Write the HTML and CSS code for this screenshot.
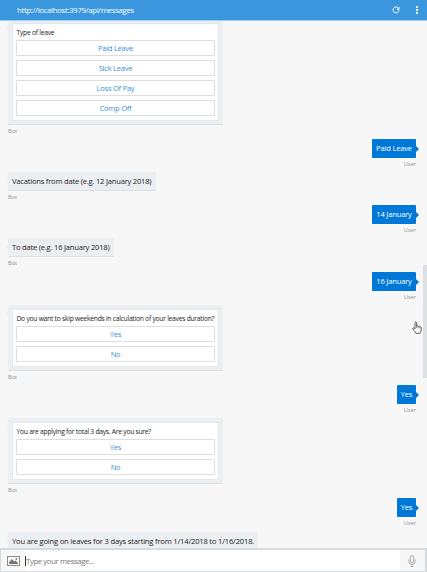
FILE: index.html
```html
<!DOCTYPE html>
<html lang="en">
<head>
<meta charset="utf-8">
<title>Bot chat</title>
<link rel="stylesheet" href="styles.css">
</head>
<body>
<div class="app">
  <header class="bar">
    <span class="url">http://localhost:3979/api/messages</span>
    <svg class="reload" viewBox="0 0 8 8"><path d="M6.6 2.2A3 3 0 1 0 7 4.4" fill="none" stroke="currentColor" stroke-width="1"/><path d="M7.4.8v3H4.4z" fill="currentColor"/></svg>
    <svg class="more" viewBox="0 0 2 8"><path d="M0 0h2v2H0zM0 3h2v2H0zM0 6h2v2H0z" fill="currentColor"/></svg>
  </header>
  <main class="chat">
    <section class="msg bot card-msg tall">
      <div class="bubble"><div class="card"><p>Type of leave</p><button>Paid Leave</button><button>Sick Leave</button><button>Loss Of Pay</button><button>Comp Off</button></div></div>
      <small>Bot</small>
    </section>
    <section class="msg user"><div class="bubble wide"><span>Paid Leave</span></div><small>User</small></section>
    <section class="msg bot"><div class="bubble b-from"><span>Vacations from date (e.g. 12 January 2018)</span></div><small>Bot</small></section>
    <section class="msg user"><div class="bubble wide"><span>14 January</span></div><small>User</small></section>
    <section class="msg bot"><div class="bubble b-to"><span>To date (e.g. 16 January 2018)</span></div><small>Bot</small></section>
    <section class="msg user"><div class="bubble wide"><span>16 January</span></div><small>User</small></section>
    <section class="msg bot card-msg">
      <div class="bubble"><div class="card"><p>Do you want to skip weekends in calculation of your leaves duration?</p><button>Yes</button><button>No</button></div></div>
      <small>Bot</small>
    </section>
    <section class="msg user"><div class="bubble short"><span>Yes</span></div><small>User</small></section>
    <section class="msg bot card-msg">
      <div class="bubble"><div class="card"><p>You are applying for total 3 days. Are you sure?</p><button>Yes</button><button>No</button></div></div>
      <small>Bot</small>
    </section>
    <section class="msg user"><div class="bubble short"><span>Yes</span></div><small>User</small></section>
    <section class="msg bot"><div class="bubble b-last"><span>You are going on leaves for 3 days starting from 1/14/2018 to 1/16/2018.</span></div></section>
  </main>
  <footer class="composer">
    <div class="attach"><svg viewBox="0 0 13 10"><rect x=".5" y=".5" width="12" height="9" fill="none" stroke="#8b8b8b"/><path d="M2 8V6.6L4.8 3l2.4 2.6 1.2-1.2L11 6.9V8z" fill="#777"/><circle cx="9.3" cy="3" r=".9" fill="#777"/></svg></div>
    <div class="field"><i></i><span>Type your message...</span></div>
    <div class="mic"><svg viewBox="0 0 8 12"><rect x="2.4" y=".5" width="3.2" height="7.4" rx="1.6" fill="none" stroke="#999" stroke-width=".8"/><path d="M.8 4.5v1.8a3.2 3.2 0 0 0 6.4 0V4.5M4 9.5v2M2.6 11.5h2.8" fill="none" stroke="#999" stroke-width=".8"/></svg></div>
  </footer>
  <div class="scroll"></div>
  <svg class="cursor" viewBox="0 0 10 13"><path d="M3 8V1.5Q3.8.1 4.6 1.5V5Q5.5 4.3 6.1 5.3 7 4.7 7.6 5.8 9 5.2 9.2 6.6V9Q9 10.5 8 12.3H4Q3.2 10.7.8 8.2.5 6.8 1.7 6.9z" fill="#fff" stroke="#444b55" stroke-width=".9"/><path d="M4.6 5v2M6.1 5.5v1.7M7.6 6v1.4" stroke="#444b55" stroke-width=".6"/></svg>
</div>
</body>
</html>
```
FILE: styles.css
```css
* { box-sizing: border-box; }
body { margin: 0; font-family: "Open Sans", "Noto Sans", sans-serif; }
.app {
  position: relative;
  display: flex;
  flex-direction: column;
  width: 427px;
  height: 572px;
  overflow: hidden;
  background: #f7f7f7;
}
.bar {
  position: relative;
  z-index: 2;
  flex: none;
  display: flex;
  align-items: center;
  height: 21px;
  padding: 0 9px 1px 17px;
  background: #3a96dd;
  border-bottom: 1px solid #a4cdef;
  color: #fff;
}
.url { flex: 1; font-size: 7.7px; line-height: 20px; white-space: nowrap; letter-spacing: -.27px; }
.reload { width: 8px; height: 8px; margin-right: 16px; }
.more { width: 2px; height: 8px; }
.chat { flex: 1; min-height: 0; margin-top: -2px; padding: 0 11px 0 8px; overflow: hidden; }
.msg { display: flex; flex-direction: column; align-items: flex-start; height: 33.15px; }
.msg.user { align-items: flex-end; }
.card-msg { height: 80.3px; }
.card-msg.tall { height: 120px; }
.bubble {
  position: relative;
  display: flex;
  align-items: center;
  height: 19px;
  padding: 0 4px;
  border-bottom: 1px solid #dde0e3;
  border-radius: 1px;
  background: #eceff2;
  color: #222;
  font-size: 7.6px;
  letter-spacing: -.2px;
  line-height: 18px;
  white-space: nowrap;
}
.bubble::before {
  content: "";
  position: absolute;
  top: 7px;
  left: -2px;
  border: solid transparent;
  border-width: 2px 2px 2px 0;
  border-right-color: #eceff2;
}
.user .bubble { background: #0078d7; border-color: #0078d7; color: #fff; justify-content: center; }
.user .bubble::before {
  top: 7px;
  left: auto;
  right: -3px;
  border-width: 3px 0 3px 3px;
  border-color: transparent transparent transparent #0078d7;
}
.wide { width: 44px; }
.short { width: 19px; }
.b-from { width: 148px; }
.b-from span { letter-spacing: -.22px; }
.b-to { width: 106px; }
.b-to span { letter-spacing: -.22px; }
.b-last { width: 250px; }
.b-last span { letter-spacing: -.19px; }
small { margin-top: 2px; font-size: 5.7px; line-height: 8px; color: #8f8f8f; }
.card-msg .bubble { width: 215px; height: 66px; padding: 4px; align-items: flex-start; }
.card-msg.tall .bubble { height: 106px; }
.card {
  display: flex;
  flex-direction: column;
  gap: 4px;
  width: 207px;
  height: 58px;
  padding: 3px;
  border: 1px solid #e2e8ee;
  background: #fff;
}
.tall .card { height: 98px; }
.card p { height: 9px; margin: 0; padding-left: .5px; font-size: 6.7px; line-height: 11px; letter-spacing: -.24px; }
.card button {
  flex: none;
  height: 16px;
  padding: 0;
  border: 1px solid #dedede;
  border-radius: 1px;
  background: #fff;
  color: #3a8fdb;
  font: 7.5px/14px "Open Sans", sans-serif;
  letter-spacing: -.22px;
}
.composer {
  position: relative;
  z-index: 2;
  flex: none;
  display: flex;
  height: 24px;
  border: solid #d5dade;
  border-width: 2px 2px 1px 1px;
  background: #fff;
}
.attach { display: flex; align-items: center; width: 24px; padding-left: 6px; background: #f8f8f8; }
.attach svg { width: 13px; height: 10px; }
.field { flex: 1; display: flex; align-items: center; color: #777; font-size: 7.7px; letter-spacing: -.35px; }
.field i { width: 1px; height: 10px; background: #333; }
.mic { display: flex; align-items: center; justify-content: center; width: 25px; background: #f7f7f7; }
.mic svg { width: 8px; height: 12px; margin-right: 1px; }
.scroll { position: absolute; right: 0; top: 265px; width: 4px; height: 113px; background: #dce0e4; }
.cursor { position: absolute; left: 412px; top: 321px; width: 10px; height: 13px; }
```
